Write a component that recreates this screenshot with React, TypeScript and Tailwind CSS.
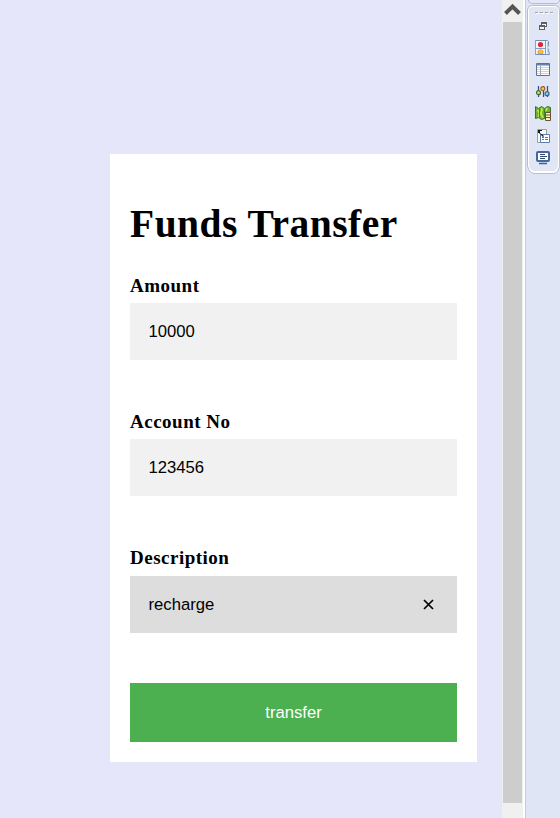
import React from "react";

function Field({ label, value, focused = false, gap, labelHeight = "h-[34px]" }: { label: string; value: string; focused?: boolean; gap: string; labelHeight?: string }) {
  return (
    <div className={gap}>
      <label className={`block font-['Liberation_Serif',serif] text-[19px] leading-[34px] font-bold tracking-[0.5px] text-black ${labelHeight}`}>{label}</label>
      <div className={`flex h-[57px] items-center justify-between pr-[23px] pl-[18.5px] text-[16.67px] text-black ${focused ? "bg-[#dddddd]" : "bg-[#f1f1f1]"}`}>
        <span>{value}</span>
        {focused && (
          <svg width="11" height="11" viewBox="0 0 11 11" fill="none" stroke="#000" strokeWidth="1.7">
            <path d="M1 1l9 9M10 1l-9 9" />
          </svg>
        )}
      </div>
    </div>
  );
}

function Strip() {
  return (
    <aside className="flex w-[34px] flex-col items-center bg-[#dfe5f5]">
      <svg width="34" height="176" viewBox="0 0 34 176" className="block">
        <path d="M2.500 0v1q1 2 3 2.500h25q2-.5 3-2.500V0" fill="#e2e8f7" stroke="#b9bdcb" />
        <path d="M1.500 10q0-4 4-4.500h24q4 .5 4 4.500v156q-1 7-6 7.500H8q-5-1-6.500-7.500z" fill="#fff" stroke="#b9bdcb" />
        <path d="M3 10q0-3 3-3h23q3 0 3 3v155q-1 6-5 6H9q-5 0-6-6z" fill="#e0e6f6" />
        {/* drag handle */}
        <path d="M10 13.500h17" stroke="#fff" strokeDasharray="3 2" />
        <path d="M9 12.500h18" stroke="#a5a29b" strokeDasharray="3 2" />
        {/* restore */}
        <g shapeRendering="crispEdges">
          <path d="M15 22h6v5h-6z" fill="#5f6063" />
          <path d="M16 24h4v2h-4z" fill="#f4f4f4" />
          <path d="M13 25h6v5h-6z" fill="#5f6063" />
          <path d="M14 27h4v2h-4z" fill="#f4f4f4" />
        </g>
        {/* palette */}
        <g transform="translate(9 40)">
          <path d="M.5.5h12l1 1v4l-1 2 1 3 1 4H.5z" fill="#eff4fb" stroke="#6f91b9" />
          <path d="M.5 15V0" stroke="#b99d62" />
          <path d="M10.500 1v13M1 8.500h9" stroke="#7d9fc5" />
          <path d="M12.500 2v11" stroke="#c3d4ea" />
          <circle cx="5.500" cy="4.500" r="2.600" fill="#df2930" />
          <path d="M3 13.500v-2.500l2.500-1.500L8 11v2.500z" fill="#ffbd3d" stroke="#e68d22" strokeWidth=".7" />
        </g>
        {/* properties table */}
        <g transform="translate(10 63)">
          <path d="M.5.500h13v12H.5z" fill="#fff" stroke="#61718f" />
          <path d="M1 1.500h12" stroke="#6482b6" />
          <path d="M1 2.500h12" stroke="#a9bde0" />
          <path d="M1 4.500h12M1 6.500h12M1 8.500h12M1 10.500h12" stroke="#ccd3da" />
          <path d="M4.500 3v9" stroke="#9fa9b6" />
        </g>
        {/* sliders */}
        <g transform="translate(10 86)" stroke="#354a7d" strokeWidth="1.200">
          <path d="M2.500 0v11M7.500 0v11M11.500 0v11" />
          <circle cx="2.500" cy="6.700" r="2" fill="#c1dc70" stroke="#4d6b32" />
          <circle cx="6.800" cy="2.700" r="2" fill="#f6ce56" stroke="#9b6424" />
          <circle cx="11" cy="7.700" r="2" fill="#91cae0" stroke="#336b92" />
        </g>
        {/* map */}
        <g transform="translate(9 106)">
          <path d="M.5.500l3 2 3-2 3 2 3-2 3 1v12l-3 1-3-2-3 1-3-2-3 1z" fill="#65b62f" stroke="#406d2a" />
          <path d="M2.500 4l2 3-1 4M7 2l-1 6 2 4M12 2l-1 3" fill="none" stroke="#c6e641" strokeWidth="1.800" />
          <path d="M4.500 3v8M9.500 3v10" stroke="#3c842a" />
          <path d="M10.500 6.500h5v8h-5z" fill="#fff4b3" stroke="#62543a" />
          <path d="M11 9h4M11 11.500h4" stroke="#62543a" />
        </g>
        {/* outline */}
        <g transform="translate(11 129)">
          <path d="M.5.500h9v13H.5z" fill="#fbfbf5" stroke="#a59e8c" />
          <path d="M3.500 5.500h9v8h-9z" fill="#fff" stroke="#5b7fae" />
          <path d="M1 1h4v1H3v2l4 3-1 1-4-4H1z" fill="#161616" />
          <path d="M5 8.500h2M5 10.500h2" stroke="#d04444" />
          <path d="M8 8.500h3M8 10.500h3" stroke="#5377a5" />
        </g>
        {/* monitor */}
        <g transform="translate(10 151)">
          <rect x="1" y="1" width="12" height="9" rx="1" fill="#f9fcff" stroke="#47669c" strokeWidth="2" />
          <path d="M4 3.500h5M4 5.500h7M4 7.500h5" stroke="#344969" />
          <path d="M3 12.500h8" stroke="#435f8e" strokeWidth="1.500" />
        </g>
      </svg>
    </aside>
  );
}

export default function App() {
  return (
    <div className="flex h-[818px] w-[560px] overflow-hidden bg-[#e5e6f9] font-['Liberation_Sans',sans-serif]">
      <main className="w-[502px] pt-[154px] pl-[110px]">
        <form className="flex h-[608px] w-[367px] flex-col bg-white px-5 pt-[45px]">
          <h1 className="h-[50px] font-['Liberation_Serif',serif] text-[39.5px] leading-[50px] font-bold tracking-[0.5px] whitespace-nowrap text-black">Funds Transfer</h1>
          <Field label="Amount" value="10000" gap="mt-5" />
          <Field label="Account No" value="123456" gap="mt-[45px]" />
          <Field label="Description" value="recharge" focused gap="mt-[45px]" labelHeight="h-[35px]" />
          <button type="button" className="mt-[50px] h-[59px] bg-[#4caf50] text-[16.67px] text-white">transfer</button>
        </form>
      </main>
      <div className="flex w-[21px] flex-col items-center bg-[#f0f0f0]">
        <svg width="21" height="22" viewBox="0 0 21 22" className="block">
          <path d="M3.500 13.500l7-7 7 7" fill="none" stroke="#555" strokeWidth="4" />
        </svg>
        <div className="h-[781px] w-[19px] bg-[#cdcdcd]" />
      </div>
      <div className="w-[3px] border-r border-[#c9cbd3] bg-white" />
      <Strip />
    </div>
  );
}
